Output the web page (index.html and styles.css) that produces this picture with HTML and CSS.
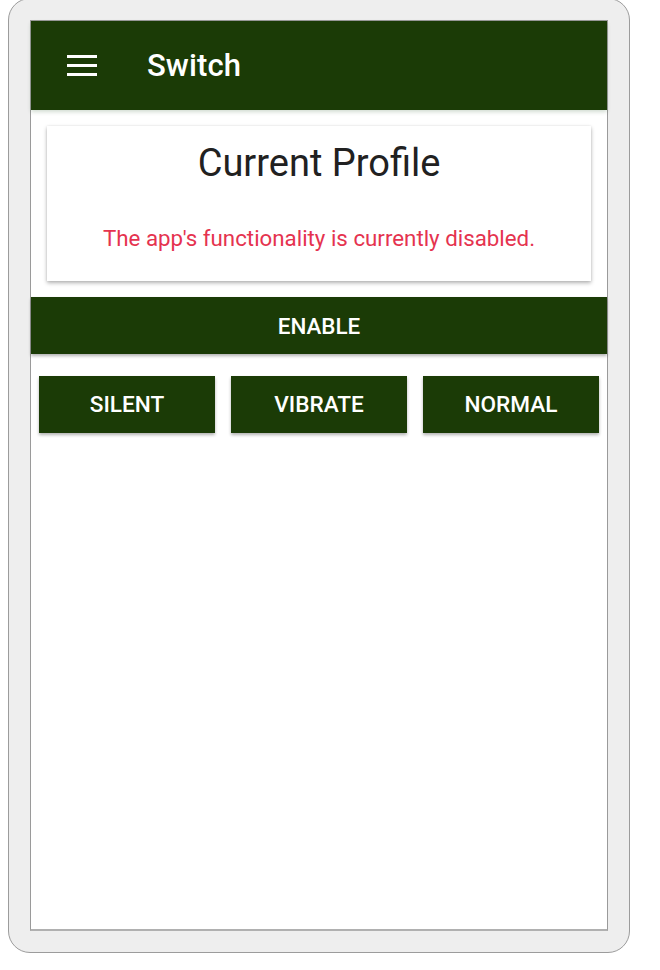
FILE: index.html
```html
<!DOCTYPE html>
<html>
<head>
<meta charset="utf-8">
<link rel="stylesheet" href="styles.css">
</head>
<body>
<div class="frame">
  <div class="screen">
    <header class="appbar">
      <svg class="menu" width="30" height="22" viewBox="0 0 30 22">
        <rect x="0" y="0" width="30" height="3" fill="#fff"/>
        <rect x="0" y="9" width="30" height="3" fill="#fff"/>
        <rect x="0" y="18" width="30" height="3" fill="#fff"/>
      </svg>
      <span class="title">Switch</span>
    </header>
    <section class="card">
      <h1 class="card-title">Current Profile</h1>
      <p class="status">The app's functionality is currently disabled.</p>
    </section>
    <button class="enable">ENABLE</button>
    <div class="modes">
      <button class="mode">SILENT</button>
      <button class="mode">VIBRATE</button>
      <button class="mode">NORMAL</button>
    </div>
  </div>
</div>
</body>
</html>
```

FILE: styles.css
```css
html, body {
  margin: 0;
  padding: 0;
  background: #ffffff;
}
body {
  padding: 0 8px;
  font-family: Roboto, "Liberation Sans", sans-serif;
}
.frame {
  width: 578px;
  margin-top: -2px;
  background: #eeeeee;
  border: 1px solid #9c9c9c;
  border-radius: 22px;
  padding: 21px;
}
.screen {
  height: 908px;
  background: #ffffff;
  border: 1px solid #9a9a9a;
  border-bottom: 2px solid #b0b0b0;
  display: flex;
  flex-direction: column;
}
.appbar {
  height: 89px;
  flex: none;
  background: #1b3b06;
  display: flex;
  align-items: center;
  padding-left: 36px;
  box-shadow: 0 2px 4px rgba(0, 60, 0, 0.18);
}
.menu {
  display: block;
  margin-top: 1px;
}
.title {
  color: #ffffff;
  font-size: 31px;
  font-weight: 500;
  margin-left: 50px;
  letter-spacing: 0.1px;
}
.card {
  margin: 16px 16px 0 16px;
  height: 155px;
  background: #fff;
  box-shadow: 0 2px 4px rgba(0, 0, 0, 0.3), 0 0 2px rgba(0, 0, 0, 0.08);
  display: flex;
  flex-direction: column;
  align-items: center;
}
.card-title {
  margin: 14px 0 0;
  font-size: 38px;
  font-weight: 400;
  color: #212121;
  line-height: 46px;
}
.status {
  margin: 39px 0 0;
  font-size: 22.3px;
  color: #e5334f;
  line-height: 26px;
}
.enable {
  margin-top: 16px;
  height: 57px;
  flex: none;
  border: none;
  background: #1b3b06;
  color: #ffffff;
  font-family: Roboto, "Liberation Sans", sans-serif;
  font-size: 22.4px;
  font-weight: 500;
  box-shadow: 0 2px 3px rgba(0, 0, 0, 0.3);
}
.modes {
  display: flex;
  gap: 16px;
  padding: 0 8px;
  margin-top: 22px;
}
.mode {
  flex: 1;
  height: 57px;
  border: none;
  background: #1b3b06;
  color: #ffffff;
  font-family: Roboto, "Liberation Sans", sans-serif;
  font-size: 22.6px;
  font-weight: 500;
  box-shadow: 0 2px 3px rgba(0, 0, 0, 0.3);
}
```
